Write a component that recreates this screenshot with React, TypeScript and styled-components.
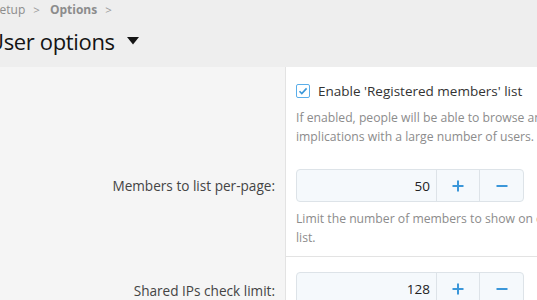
import React from 'react';
import styled, { createGlobalStyle } from 'styled-components';

const GlobalStyle = createGlobalStyle`
  html, body { margin:0; padding:0; overflow:hidden; background:#fff; }
  body { font-family:"Open Sans","Noto Sans","Liberation Sans",sans-serif; color:#333; }
`;

const Page = styled.div`
  width:537px;height:300px;overflow:hidden;background:#fff;
`;

const Header = styled.div`
  background:#eeeeee;padding:0 0 11px;margin:0;
`;

const HeaderInner = styled.div`
  margin-left:-7px;
`;

const Crumbs = styled.div`
  display:flex;align-items:center;height:18px;font-size:12px;color:#8c8c8c;white-space:nowrap;
`;

const Crumb = styled.span<{strong?:boolean}>`
  font-weight:${p=>p.strong?700:400};
`;

const Sep = styled.span`
  margin:0 10px 0 8px;font-size:11.5px;color:#9a9a9a;
`;

const Title = styled.h1`
  display:flex;align-items:center;gap:12px;margin:8px 0 0 -5px;
  font-size:22px;line-height:30px;font-weight:400;letter-spacing:-0.35px;color:#141414;white-space:nowrap;
`;

const Form = styled.div`
  width:1100px;
`;

const Row = styled.div`
  display:grid;grid-template-columns:286px 1fr;
`;

const LabelCell = styled.div<{top:number}>`
  background:#f5f5f5;border-right:1px solid #e3e3e3;
  text-align:right;padding:${p=>p.top}px 10px 0 0;
  font-size:13.6px;line-height:20px;color:#444;white-space:nowrap;
`;

const FieldCell = styled.div<{separated?:boolean;pad:string}>`
  padding:${p=>p.pad};border-top:${p=>p.separated?'1px solid #e3e3e3':'none'};
`;

const Check = styled.label`
  display:flex;align-items:center;gap:8px;font-size:13.5px;line-height:20px;color:#333;white-space:nowrap;
`;

const Box = styled.span`
  width:12px;height:12px;border:1px solid #5aaeea;border-radius:2px;background:#fff;
  display:inline-flex;align-items:center;justify-content:center;
`;

const Hint = styled.div`
  font-size:12.2px;line-height:18.5px;color:#8c8c8c;white-space:nowrap;margin-top:8px;
`;

const Spin = styled.div`
  display:flex;width:228px;height:33px;box-sizing:border-box;
  border:1px solid #dde3e8;border-radius:4px;background:#f5f9fc;overflow:hidden;
`;

const SpinValue = styled.div`
  flex:1;display:flex;align-items:center;justify-content:flex-end;padding-right:6px;
  font-size:13.5px;color:#222;
`;

const SpinBtn = styled.div<{w:number}>`
  width:${p=>p.w}px;display:flex;align-items:center;justify-content:center;
  border-left:1px solid #dde3e8;
`;

const Plus = () => (
  <svg width="12" height="12" viewBox="0 0 12 12"><path d="M6 0.5v11M0.5 6h11" stroke="#3b97d9" strokeWidth="2"/></svg>
);
const Minus = () => (
  <svg width="12" height="12" viewBox="0 0 12 12"><path d="M0.5 6h11" stroke="#3b97d9" strokeWidth="2"/></svg>
);

const Spinbox: React.FC<{value:number}> = ({value}) => (
  <Spin>
    <SpinValue>{value}</SpinValue>
    <SpinBtn w={42}><Plus/></SpinBtn>
    <SpinBtn w={43}><Minus/></SpinBtn>
  </Spin>
);

export default function App(){
  return (
    <Page>
      <GlobalStyle/>
      <Header>
        <HeaderInner>
          <Crumbs>
            <Crumb>Setup</Crumb><Sep>&gt;</Sep><Crumb strong>Options</Crumb><Sep>&gt;</Sep>
          </Crumbs>
          <Title>
            User options
            <svg width="12" height="8" viewBox="0 0 12 8"><path d="M0 0h12L6 7.5z" fill="#141414"/></svg>
          </Title>
        </HeaderInner>
      </Header>
      <Form>
        <Row>
          <LabelCell top={0}/>
          <FieldCell pad="14px 10px 7px">
            <Check>
              <Box>
                <svg width="10" height="10" viewBox="0 0 10 10"><path d="M1.5 5.2l2.3 2.3L8.6 2.4" stroke="#3b97d9" strokeWidth="1.6" fill="none"/></svg>
              </Box>
              Enable 'Registered members' list
            </Check>
            <Hint>
              If enabled, people will be able to browse and search the list of registered members. This may have performance<br/>
              implications with a large number of users.
            </Hint>
          </FieldCell>
        </Row>
        <Row>
          <LabelCell top={23}>Members to list per-page:</LabelCell>
          <FieldCell pad="16px 10px 9px">
            <Spinbox value={50}/>
            <Hint>
              Limit the number of members to show on each page of the registered members<br/>
              list.
            </Hint>
          </FieldCell>
        </Row>
        <Row>
          <LabelCell top={25}>Shared IPs check limit:</LabelCell>
          <FieldCell separated pad="15px 10px 14px">
            <Spinbox value={128}/>
          </FieldCell>
        </Row>
      </Form>
    </Page>
  );
}
